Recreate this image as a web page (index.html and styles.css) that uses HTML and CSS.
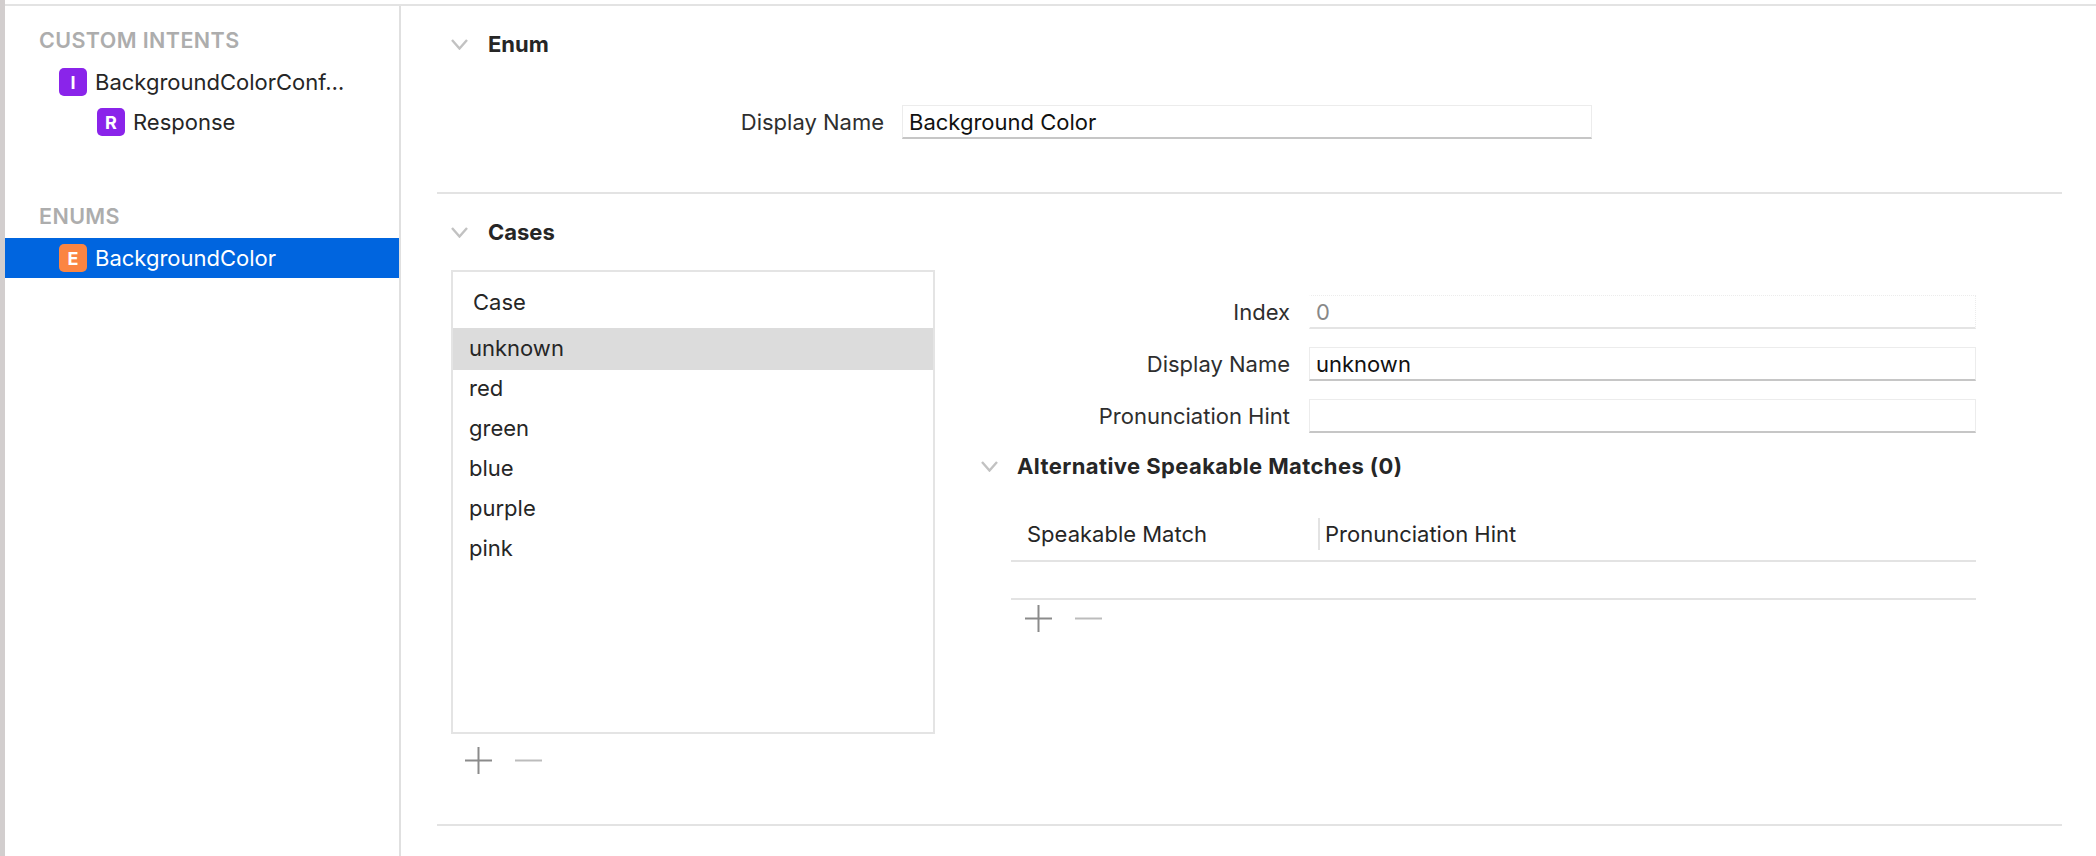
FILE: index.html
```html
<!DOCTYPE html>
<html lang="en">
<head>
<meta charset="utf-8">
<title>Background Color</title>
<link rel="stylesheet" href="styles.css">
</head>
<body>
<div class="app">
  <aside class="sidebar">
    <div class="group-title first">CUSTOM INTENTS</div>
    <div class="item"><span class="badge purple">I</span><span>BackgroundColorConf…</span></div>
    <div class="item nested"><span class="badge purple">R</span><span>Response</span></div>
    <div class="group-title second">ENUMS</div>
    <div class="item selected"><span class="badge orange">E</span><span>BackgroundColor</span></div>
  </aside>
  <main class="main">
    <section class="section enum">
      <div class="section-head">
        <svg class="chevron" viewBox="0 0 17 11"><polyline points="1,1 8.5,9.5 16,1"/></svg>
        <h2>Enum</h2>
      </div>
      <div class="enum-row">
        <label class="label">Display Name</label>
        <div class="field active">Background Color</div>
      </div>
    </section>
    <section class="section cases">
      <div class="section-head">
        <svg class="chevron" viewBox="0 0 17 11"><polyline points="1,1 8.5,9.5 16,1"/></svg>
        <h2>Cases</h2>
      </div>
      <div class="cases-body">
        <div class="case-col">
          <div class="case-box">
            <div class="case-head">Case</div>
            <div class="case-row current">unknown</div>
            <div class="case-row">red</div>
            <div class="case-row">green</div>
            <div class="case-row">blue</div>
            <div class="case-row">purple</div>
            <div class="case-row">pink</div>
          </div>
          <div class="tools">
            <svg class="tool" viewBox="0 0 27 27"><path class="plus" d="M0 13.5H27M13.5 0V27"/></svg>
            <svg class="tool" viewBox="0 0 27 27"><path class="minus" d="M0 13.5H27"/></svg>
          </div>
        </div>
        <div class="detail">
          <div class="detail-grid">
            <label class="label">Index</label>
            <div class="field readonly">0</div>
            <label class="label">Display Name</label>
            <div class="field active">unknown</div>
            <label class="label">Pronunciation Hint</label>
            <div class="field active"></div>
          </div>
          <div class="sub-head">
            <svg class="chevron" viewBox="0 0 17 11"><polyline points="1,1 8.5,9.5 16,1"/></svg>
            <h3>Alternative Speakable Matches (0)</h3>
          </div>
          <div class="match-table">
            <div class="match-head">
              <div class="match-col first-col">Speakable Match</div>
              <div class="match-col second-col">Pronunciation Hint</div>
            </div>
            <div class="match-empty"></div>
            <div class="tools match-tools">
              <svg class="tool" viewBox="0 0 27 27"><path class="plus" d="M0 13.5H27M13.5 0V27"/></svg>
              <svg class="tool" viewBox="0 0 27 27"><path class="minus" d="M0 13.5H27"/></svg>
            </div>
          </div>
        </div>
      </div>
    </section>
  </main>
</div>
</body>
</html>
```
FILE: styles.css
```css
* { box-sizing: border-box; }
html, body { margin: 0; height: 100%; background: #fff; overflow: hidden; }
body { font-family: Inter, "Liberation Sans", sans-serif; color: #262626; font-size: 22px; }
.app {
  height: 856px;
  display: flex;
  border-left: 5px solid #d2cece;
  margin-top: 0;
  padding-top: 4px;
  position: relative;
}
.app::before {
  content: "";
  position: absolute;
  left: 0; right: 0; top: 4px;
  height: 2px;
  background: #e3e3e3;
}
.sidebar {
  width: 396px;
  flex: none;
  border-right: 2px solid #e0e0e0;
  padding-top: 15px;
}
.group-title {
  font-size: 21.5px;
  font-weight: 600;
  letter-spacing: 0.4px;
  color: #adadad;
  padding-left: 34px;
  line-height: 43px;
}
.group-title.second { margin-top: 52px; line-height: 44px; }
.item {
  height: 40px;
  display: flex;
  align-items: center;
  padding-left: 54px;
  gap: 8px;
}
.item.nested { padding-left: 92px; }
.item.selected { background: #0065df; color: #fff; }
.badge {
  width: 28px; height: 28px;
  border-radius: 5px;
  color: #fff;
  font-weight: 700;
  font-size: 18px;
  display: flex; align-items: center; justify-content: center;
}
.purple { background: #8a24ea; }
.orange { background: #fb8542; }
.main { flex: 1; padding: 2px 34px 0 36px; min-width: 0; }
.section { border-bottom: 2px solid #e3e3e3; }
.section.enum { height: 188px; padding-top: 24px; }
.section.cases { height: 632px; padding-top: 24px; }
.section-head { height: 28px; display: flex; align-items: center; padding-left: 14px; gap: 20px; }
.chevron { width: 17px; height: 11px; flex: none; }
.chevron polyline { fill: none; stroke: #c2c2c2; stroke-width: 2.4; }
h2, h3 { margin: 0; font-size: 22px; font-weight: 700; color: #262626; }
h3 { letter-spacing: 0.4px; }
.enum-row { margin-top: 47px; display: grid; grid-template-columns: 446px 690px; column-gap: 19px; align-items: center; }
.enum-row .label { margin-right: -1px; }
.label { text-align: right; color: #2e2e2e; }
.field {
  height: 34px;
  padding-left: 6px;
  line-height: 32px;
  color: #111;
  background: #fff;
  border: 1px solid #ececec;
}
.field.active { border-bottom: 2px solid #c6c6c6; }
.field.readonly { color: #888; border: 1px dotted #ececec; border-bottom: 2px solid #e4e4e4; border-left-color: #fff; }
.cases-body { display: flex; margin-top: 24px; padding-left: 14px; gap: 46px; }
.case-col { width: 484px; flex: none; }
.case-box { height: 464px; border: 2px solid #e4e4e4; }
.case-head { height: 56px; padding: 9px 0 0 20px; line-height: 42px; }
.case-row { height: 40px; line-height: 40px; padding-left: 16px; }
.case-row.current { height: 42px; margin-bottom: -2px; background: #dcdcdc; }
.tools { display: flex; gap: 23px; margin: 13px 0 0 14px; }
.tool { width: 27px; height: 27px; flex: none; }
.plus { fill: none; stroke: #8b8b8b; stroke-width: 2; }
.minus { fill: none; stroke: #bcbcbc; stroke-width: 2; }
.detail { width: 995px; flex: none; padding-top: 25px; }
.detail-grid { display: grid; grid-template-columns: 309px 667px; column-gap: 19px; row-gap: 18px; align-items: center; }
.sub-head { display: flex; align-items: center; gap: 19px; height: 28px; margin-top: 19px; }
.match-table { margin: 34px 0 0 30px; }
.match-head { display: flex; height: 48px; border-bottom: 2px solid #e3e3e3; padding-top: 4px; align-items: flex-start; }
.match-col { height: 32px; line-height: 32px; }
.first-col { width: 307px; padding-left: 16px; }
.second-col { border-left: 2px solid #e3e3e3; padding-left: 5px; }
.match-empty { height: 38px; border-bottom: 2px solid #e3e3e3; }
.match-tools { margin-top: 5px; }
```
